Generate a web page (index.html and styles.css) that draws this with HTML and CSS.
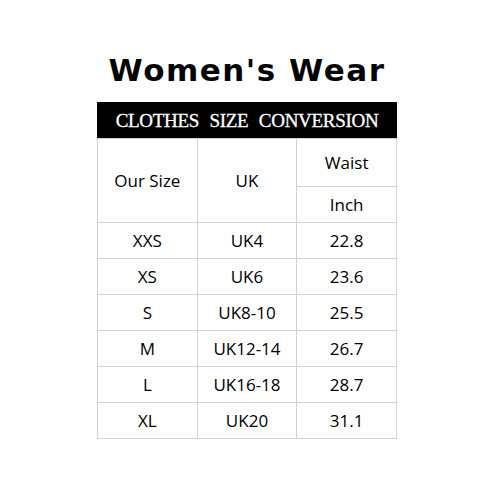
FILE: index.html
```html
<!DOCTYPE html>
<html>
<head>
<meta charset="utf-8">
<link rel="stylesheet" href="styles.css">
</head>
<body>
<div class="page">
  <h1 class="title">Women's Wear</h1>
  <div class="banner">CLOTHES SIZE CONVERSION</div>
  <table class="sizes">
    <tr class="head1">
      <td rowspan="2">Our Size</td>
      <td rowspan="2">UK</td>
      <td>Waist</td>
    </tr>
    <tr class="head2"><td>Inch</td></tr>
    <tr><td>XXS</td><td>UK4</td><td>22.8</td></tr>
    <tr><td>XS</td><td>UK6</td><td>23.6</td></tr>
    <tr><td>S</td><td>UK8-10</td><td>25.5</td></tr>
    <tr><td>M</td><td>UK12-14</td><td>26.7</td></tr>
    <tr><td>L</td><td>UK16-18</td><td>28.7</td></tr>
    <tr><td>XL</td><td>UK20</td><td>31.1</td></tr>
  </table>
</div>
</body>
</html>
```
FILE: styles.css
```css
html, body {
  margin: 0;
  padding: 0;
  background: #ffffff;
}
.page {
  width: 300px;
  margin-left: 97px;
  padding-top: 51px;
}
.title {
  margin: 0;
  height: 51px;
  font-family: "DejaVu Sans", Verdana, sans-serif;
  font-weight: bold;
  font-size: 31px;
  line-height: 38px;
  letter-spacing: 1.5px;
  text-align: center;
  color: #050505;
}
.banner {
  height: 36px;
  background: #000000;
  color: #ffffff;
  font-family: "Liberation Serif", "Times New Roman", serif;
  font-size: 19px;
  line-height: 37px;
  letter-spacing: -0.3px;
  word-spacing: 6px;
  text-align: center;
  -webkit-text-stroke: 0.3px #ffffff;
}
.sizes {
  width: 300px;
  border-collapse: collapse;
  table-layout: fixed;
  font-family: "Open Sans", "Noto Sans", sans-serif;
  font-size: 17px;
  color: #000000;
}
.sizes td {
  height: 35px;
  padding: 0;
  border: 1px solid #d2d2d2;
  text-align: center;
  vertical-align: middle;
}
.sizes .head1 td {
  height: 47px;
}
```
